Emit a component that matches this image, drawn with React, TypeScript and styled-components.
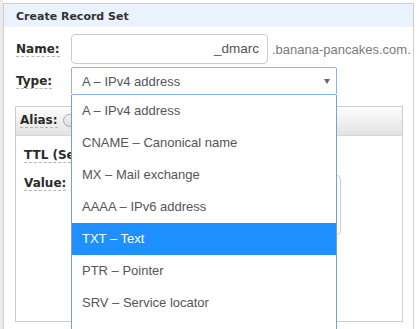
import React, { FC } from "react";
import styled, { createGlobalStyle } from "styled-components";

const GlobalStyle = createGlobalStyle`
  html, body {
    margin: 0;
    padding: 0;
    overflow: hidden;
    background: #fff;
  }
`;

const Page = styled.div`
  box-sizing: border-box;
  height: 100vh;
  padding-top: 3px;
  border-left: 3px solid #ebebeb;
`;

const Panel = styled.div`
  box-sizing: border-box;
  width: 411px;
  min-height: 420px;
  border: 1px solid #ccc;
  background: #fff;
`;

const PanelHeader = styled.div`
  box-sizing: border-box;
  height: 23px;
  padding: 3px 12px 0;
  background: #eaf2fd;
  font-family: "DejaVu Sans", Verdana, sans-serif;
  font-size: 11px;
  font-weight: bold;
  line-height: 20px;
  color: #333;
`;

const Form = styled.div`
  display: grid;
  grid-template-columns: 55px auto;
  row-gap: 3px;
  align-items: center;
  padding: 7px 12px 0;
`;

const Label = styled.span`
  justify-self: start;
  font-family: "DejaVu Sans", Verdana, sans-serif;
  font-size: 12px;
  font-weight: bold;
  color: #2b2b2b;
  border-bottom: 1px dashed #b5b5b5;
  white-space: nowrap;
`;

const NameField = styled.div`
  display: flex;
  align-items: center;
`;

const TextInput = styled.div`
  box-sizing: border-box;
  width: 197px;
  height: 30px;
  padding-right: 8px;
  border: 1px solid #ccc;
  border-radius: 4px;
  text-align: right;
  font-family: "Liberation Sans", Arial, sans-serif;
  font-size: 13.5px;
  line-height: 28px;
  color: #555;
`;

const Suffix = styled.span`
  margin-left: 4px;
  font-family: "Liberation Sans", Arial, sans-serif;
  font-size: 13px;
  color: #7a7a7a;
  white-space: nowrap;
`;

const SelectWrap = styled.div`
  position: relative;
  width: 266px;
`;

const SelectBox = styled.div`
  box-sizing: border-box;
  display: flex;
  align-items: center;
  justify-content: space-between;
  height: 28px;
  padding: 0 6px 0 10px;
  border: 1px solid #8db3ee;
  border-radius: 2px;
  font-family: "Liberation Sans", Arial, sans-serif;
  font-size: 13px;
  color: #555;
`;

const Arrow = styled.span`
  width: 0;
  height: 0;
  border-left: 3px solid transparent;
  border-right: 3px solid transparent;
  border-top: 5px solid #666;
`;

const OptionList = styled.ul`
  position: absolute;
  top: 100%;
  left: 0;
  right: 0;
  z-index: 10;
  margin: 0;
  padding: 0 0 40px;
  list-style: none;
  background: #fff;
  border: 1px solid #7f9cc9;
  border-top: none;
`;

const Option = styled.li<{ $active?: boolean }>`
  height: 32px;
  padding-left: 10px;
  font-family: "Liberation Sans", Arial, sans-serif;
  font-size: 13px;
  line-height: 32px;
  color: ${(p) => (p.$active ? "#fff" : "#555")};
  background: ${(p) => (p.$active ? "#1e90ff" : "#fff")};
  white-space: nowrap;
`;

const AliasPanel = styled.div`
  box-sizing: border-box;
  height: 216px;
  margin: 11px 10px 0 11px;
  border: 1px solid #ccc;
`;

const AliasHeader = styled.div`
  box-sizing: border-box;
  display: flex;
  align-items: center;
  gap: 5px;
  height: 29px;
  padding: 0 4px 1px;
  background: linear-gradient(#fdfdfd, #e3e3e3);
  border-bottom: 1px solid #d6d6d6;
`;

const Radio = styled.span`
  box-sizing: border-box;
  width: 13px;
  height: 13px;
  border: 1px solid #a9a9a9;
  border-radius: 50%;
  background: linear-gradient(#f2f2f2, #ddd);
`;

const AliasBody = styled.div`
  display: grid;
  grid-template-columns: 100px 217px;
  row-gap: 4px;
  align-items: start;
  padding: 7px 8px;
`;

const RowLabel = styled(Label)`
  margin-top: 5px;
`;

const SmallInput = styled.div`
  box-sizing: border-box;
  width: 120px;
  height: 24px;
  border: 1px solid #ccc;
  border-radius: 4px;
`;

const TextArea = styled.div`
  box-sizing: border-box;
  height: 60px;
  margin-top: 4px;
  border: 1px solid #ccc;
  border-radius: 4px;
`;

const types = [
  "A – IPv4 address",
  "CNAME – Canonical name",
  "MX – Mail exchange",
  "AAAA – IPv6 address",
  "TXT – Text",
  "PTR – Pointer",
  "SRV – Service locator",
];

const App: FC = () => (
  <>
    <GlobalStyle />
    <Page>
      <Panel>
        <PanelHeader>Create Record Set</PanelHeader>
        <Form>
          <Label>Name:</Label>
          <NameField>
            <TextInput>_dmarc</TextInput>
            <Suffix>.banana-pancakes.com.</Suffix>
          </NameField>
          <Label>Type:</Label>
          <SelectWrap>
            <SelectBox>
              A – IPv4 address
              <Arrow />
            </SelectBox>
            <OptionList>
              {types.map((t) => (
                <Option key={t} $active={t.startsWith("TXT")}>
                  {t}
                </Option>
              ))}
            </OptionList>
          </SelectWrap>
        </Form>
        <AliasPanel>
          <AliasHeader>
            <Label>Alias:</Label>
            <Radio />
          </AliasHeader>
          <AliasBody>
            <RowLabel>TTL (Seconds):</RowLabel>
            <SmallInput />
            <RowLabel>Value:</RowLabel>
            <TextArea />
          </AliasBody>
        </AliasPanel>
      </Panel>
    </Page>
  </>
);

export default App;
